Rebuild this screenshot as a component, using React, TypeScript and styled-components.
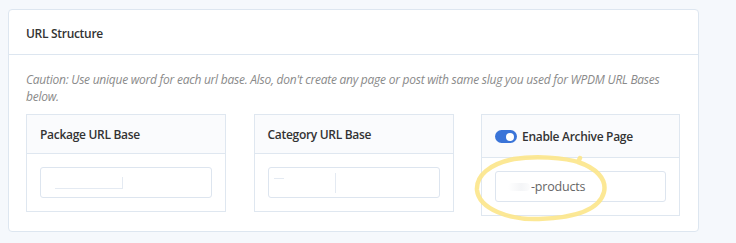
import React from "react";
import styled, { createGlobalStyle } from "styled-components";

const Global = createGlobalStyle`
  html, body { margin: 0; padding: 0; background: #f5f8fc; }
  body { font-family: "Open Sans", "Noto Sans", "Liberation Sans", sans-serif; color: #333; }
  * { box-sizing: border-box; }
`;

const Page = styled.div`
  padding: 9px 0 0 8px;
`;

const Card = styled.section`
  width: 691px;
  background: #fff;
  border: 1px solid #dde6f0;
  border-radius: 4px;
`;

const CardHeader = styled.header`
  height: 45px;
  display: flex;
  align-items: center;
  padding: 2px 0 0 17px;
  border-bottom: 1px solid #dde6f0;
  font-size: 12px;
  font-weight: 600;
  color: #333;
  letter-spacing: -0.3px;
`;

const CardBody = styled.div`
  padding: 16px 18px 15px 17px;
`;

const Caution = styled.p`
  margin: 0 0 9px;
  font-size: 12px;
  line-height: 17px;
  font-style: italic;
  color: #8a8a8a;
  letter-spacing: -0.25px;
`;

const Row = styled.div`
  display: grid;
  grid-template-columns: 200px 200px 199px;
  column-gap: 27.5px;
  align-items: start;
`;

const Panel = styled.div`
  position: relative;
  background: #fff;
  border: 1px solid #dfe7f0;
`;

const PanelHeader = styled.div<{ $tall?: boolean }>`
  height: ${(p) => (p.$tall ? 43 : 39)}px;
  display: flex;
  align-items: center;
  gap: 5px;
  padding: 1px 0 0 13px;
  background: #fafbfd;
  border-bottom: 1px solid #dfe7f0;
  font-size: 12px;
  font-weight: 600;
  color: #333;
  letter-spacing: -0.3px;
`;

const PanelBody = styled.div`
  padding: 13px;
`;

const Field = styled.div`
  position: relative;
  height: 31px;
  border: 1px solid #dde5ef;
  border-radius: 3px;
  background: #fff;
  display: flex;
  align-items: center;
  padding-left: 12px;
  font-size: 12.5px;
  color: #666;
  letter-spacing: -0.2px;
`;

const Mark = styled.span<{ $l: number; $t: number; $w: number; $h: number }>`
  position: absolute;
  left: ${(p) => p.$l}px;
  top: ${(p) => p.$t}px;
  width: ${(p) => p.$w}px;
  height: ${(p) => p.$h}px;
  background: #e4eaf2;
`;

const Blur = styled.span`
  display: inline-block;
  width: 22px;
  height: 8px;
  margin-right: 1px;
  border-radius: 4px;
  background: linear-gradient(90deg, rgba(246,247,249,0) 0%, #f4f5f7 60%, rgba(246,247,249,0.4) 100%);
`;

const Toggle = styled.span`
  position: relative;
  width: 22px;
  height: 13px;
  border-radius: 7px;
  background: #3a74d8;
  flex: none;
  &::after {
    content: "";
    position: absolute;
    right: 3px;
    top: 2.5px;
    width: 8px;
    height: 8px;
    border-radius: 50%;
    background: #fff;
  }
`;

const Annotation = styled.svg`
  position: absolute;
  left: -8px;
  top: 39px;
  pointer-events: none;
  overflow: visible;
`;

export default function App() {
  return (
    <>
      <Global />
      <Page>
        <Card>
          <CardHeader>URL Structure</CardHeader>
          <CardBody>
            <Caution>
              Caution: Use unique word for each url base. Also, don't create any page or post with same slug you used for WPDM URL Bases below.
            </Caution>
            <Row>
              <Panel>
                <PanelHeader>Package URL Base</PanelHeader>
                <PanelBody>
                  <Field>
                    <Mark $l={14} $t={20} $w={67} $h={1} />
                    <Mark $l={81} $t={9} $w={1} $h={12} />
                  </Field>
                </PanelBody>
              </Panel>
              <Panel>
                <PanelHeader>Category URL Base</PanelHeader>
                <PanelBody>
                  <Field>
                    <Mark $l={5} $t={10} $w={10} $h={1} />
                    <Mark $l={66} $t={5} $w={1} $h={20} />
                  </Field>
                </PanelBody>
              </Panel>
              <Panel>
                <PanelHeader $tall>
                  <Toggle />
                  Enable Archive Page
                </PanelHeader>
                <PanelBody>
                  <Field>
                    <Blur />
                    -products
                  </Field>
                </PanelBody>
                <Annotation width="136" height="68" viewBox="0 0 136 68">
                  <path
                    d="M107 9 C 90 3, 60 2, 40 5 C 15 10, 2 22, 3 36 C 5 55, 35 66, 65 65 C 95 64, 125 58, 130 38 C 133 25, 122 14, 104 8 L 106 4"
                    fill="none"
                    stroke="#fce58a"
                    strokeOpacity="0.9"
                    strokeWidth="4.5"
                    strokeLinecap="round"
                    strokeLinejoin="round"
                  />
                </Annotation>
              </Panel>
            </Row>
          </CardBody>
        </Card>
      </Page>
    </>
  );
}
